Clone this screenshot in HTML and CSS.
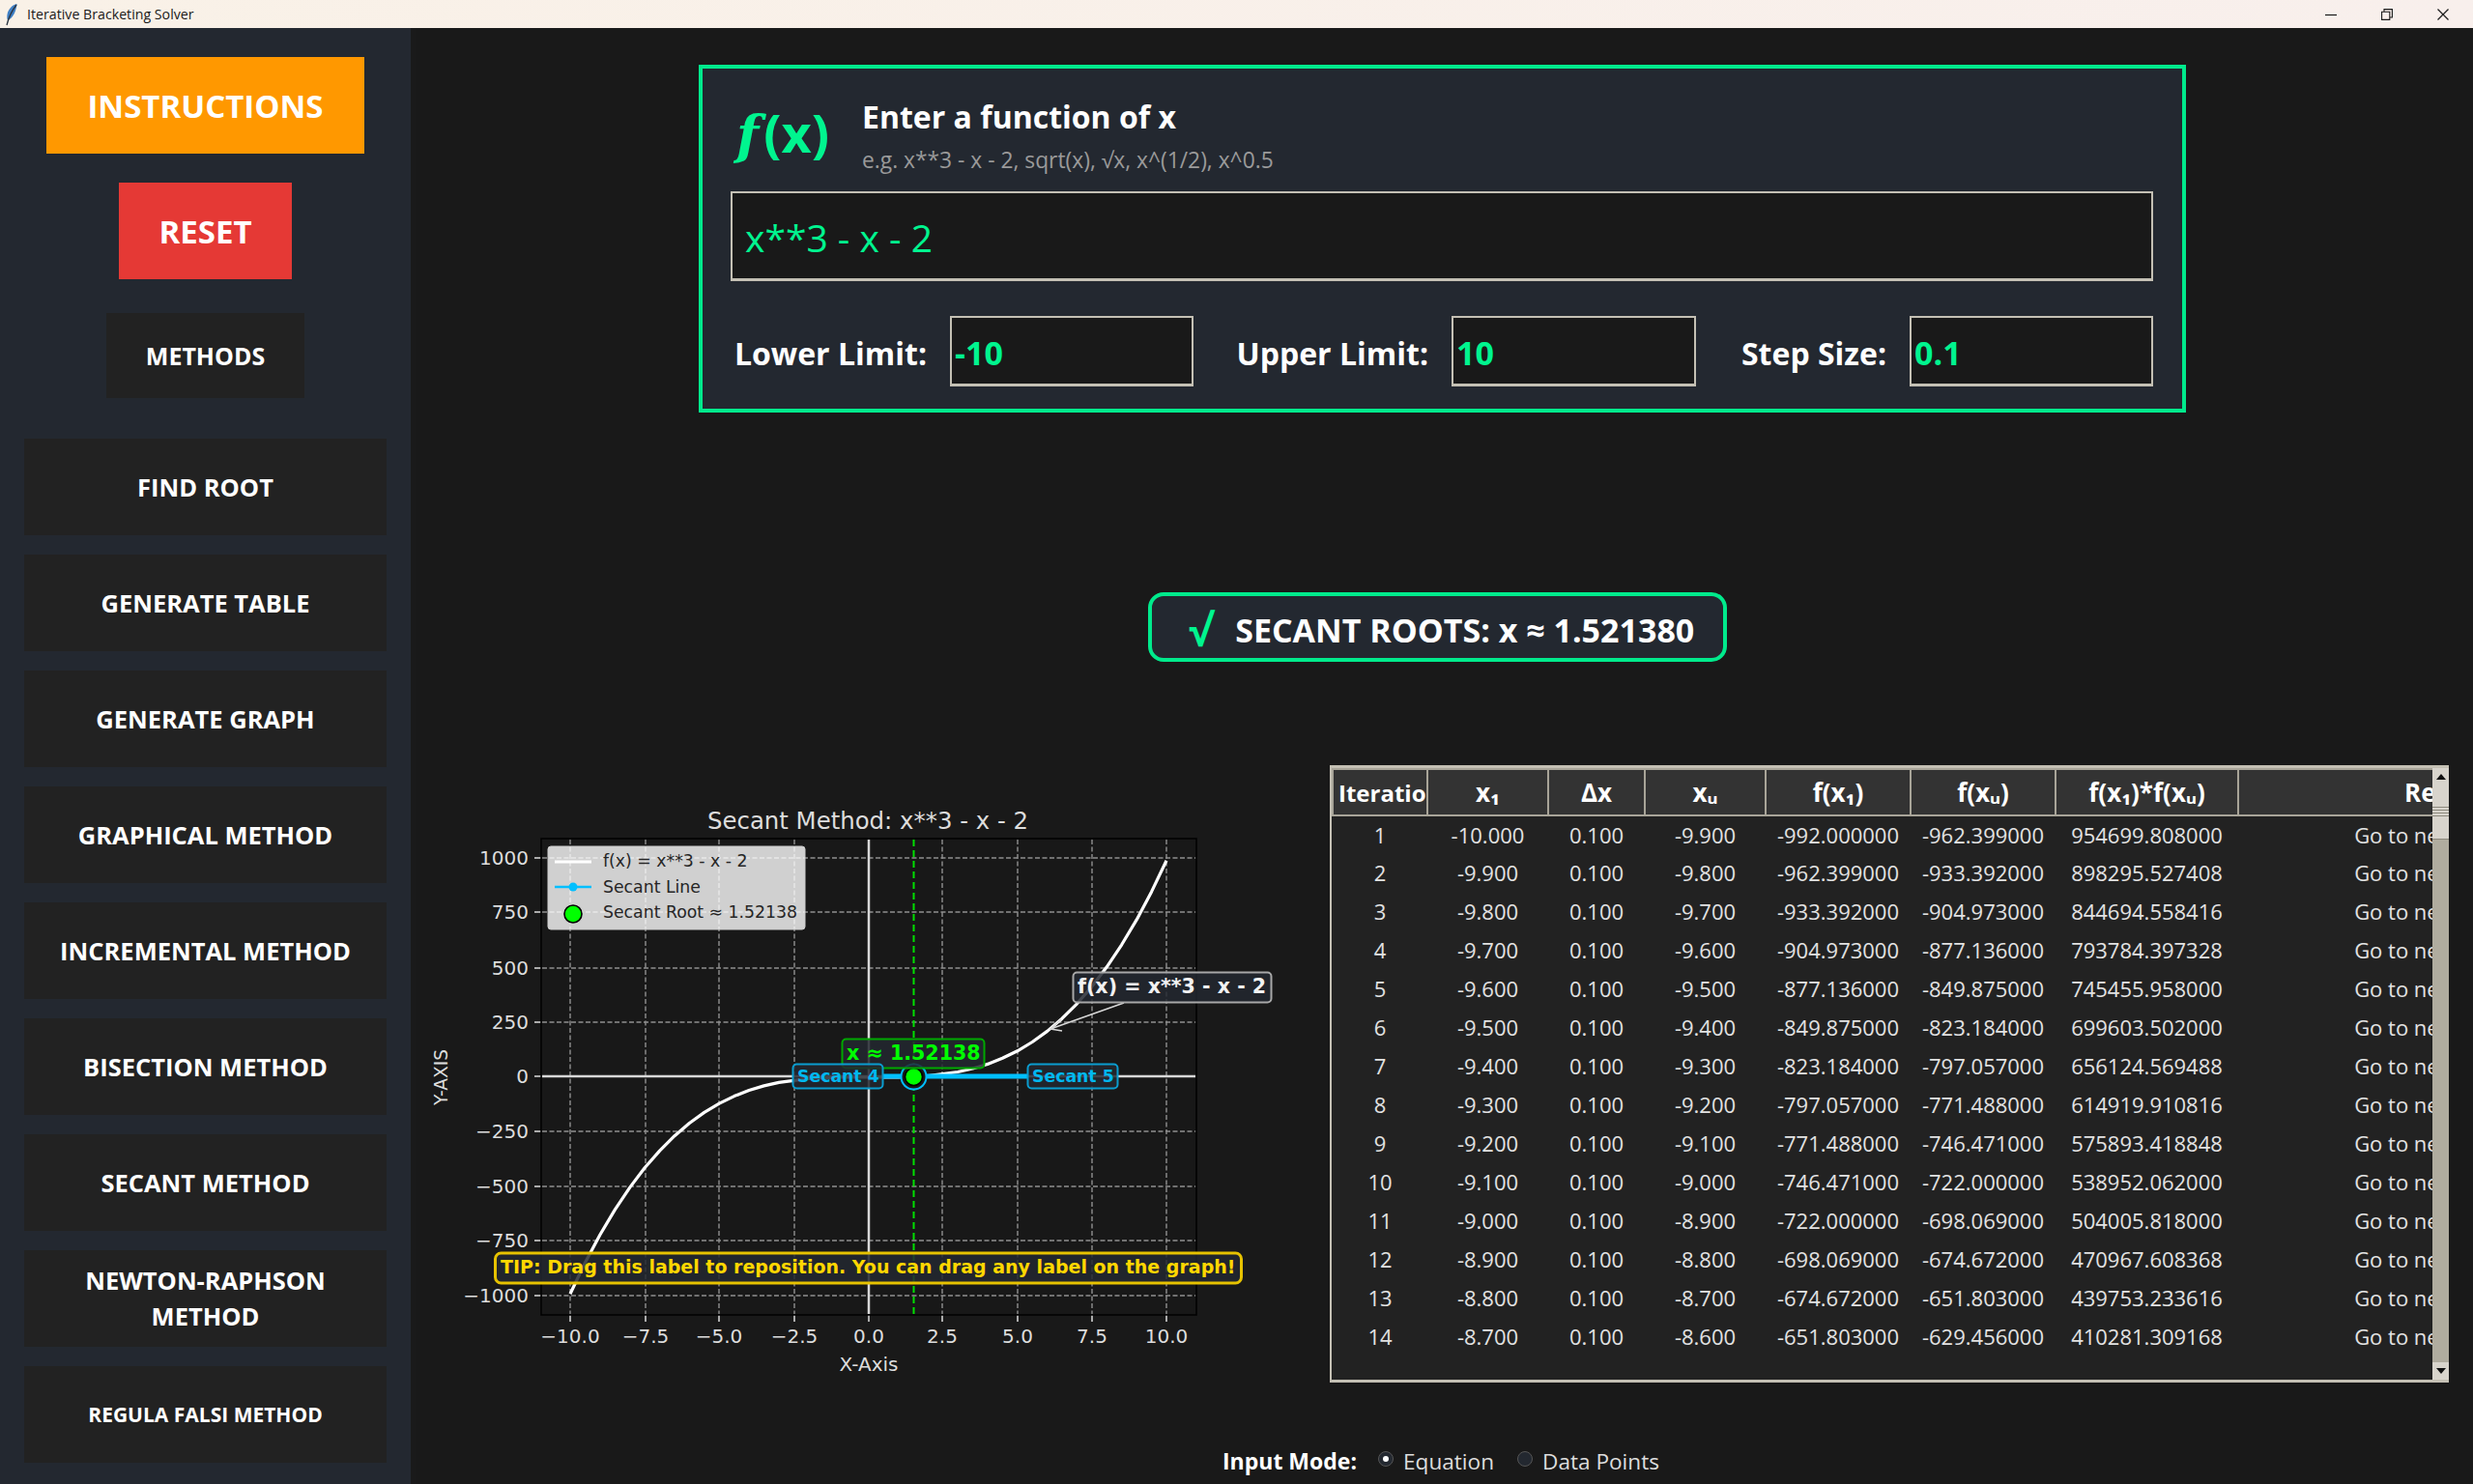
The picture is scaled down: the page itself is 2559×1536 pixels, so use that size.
FILE: index.html
```html
<!DOCTYPE html>
<html lang="en">
<head>
  <meta charset="UTF-8">
  <title>Iterative Bracketing Solver</title>
  <link rel="stylesheet" href="styles.css">
</head>
<body>
  <header class="titlebar">
    <svg class="app-icon" width="14" height="24" viewBox="0 0 14 24">
      <path d="M12.5 1C8 2 3.5 6 2.5 12c-.4 2.6-.2 4.500.5 6 3-1 6.500-5 8-10 .7-2.500 1.500-5 1.500-7z" fill="#3f7fc4"/>
      <path d="M12 2C8 7 4.500 13 2 23" fill="none" stroke="#2b3440" stroke-width="1.300"/>
    </svg>
    <span class="app-title">Iterative Bracketing Solver</span>
    <div class="window-controls">
      <svg width="12" height="12" viewBox="0 0 12 12"><path d="M0 6.500h12" stroke="#1a1a1a" stroke-width="1.200"/></svg>
      <svg width="12" height="12" viewBox="0 0 12 12"><path d="M.6 3.200h8.200v8.200H.6zM3 3V.6h8.400V9H9" fill="none" stroke="#1a1a1a" stroke-width="1.100"/></svg>
      <svg width="12" height="12" viewBox="0 0 12 12"><path d="M.5.500l11 11M11.500.500l-11 11" stroke="#1a1a1a" stroke-width="1.200"/></svg>
    </div>
  </header>

  <div class="app">
    <aside class="sidebar">
      <button class="btn btn-instructions">INSTRUCTIONS</button>
      <button class="btn btn-reset">RESET</button>
      <div class="methods-title">METHODS</div>
      <div class="method-list">
        <button class="btn-method">FIND ROOT</button>
        <button class="btn-method">GENERATE TABLE</button>
        <button class="btn-method">GENERATE GRAPH</button>
        <button class="btn-method">GRAPHICAL METHOD</button>
        <button class="btn-method">INCREMENTAL METHOD</button>
        <button class="btn-method">BISECTION METHOD</button>
        <button class="btn-method">SECANT METHOD</button>
        <button class="btn-method">NEWTON-RAPHSON<br>METHOD</button>
        <button class="btn-method btn-small">REGULA FALSI METHOD</button>
      </div>
    </aside>

    <main class="content">
      <section class="func-card">
        <div class="func-head">
          <div class="fx-logo"><i>f</i>(x)</div>
          <div>
            <div class="func-title">Enter a function of x</div>
            <div class="func-hint">e.g. x**3 - x - 2, sqrt(x), √x, x^(1/2), x^0.5</div>
          </div>
        </div>
        <input class="func-input" type="text" value="x**3 - x - 2">
        <div class="limits">
          <label class="limit-label">Lower Limit:</label>
          <input class="limit-input" type="text" value="-10">
          <label class="limit-label">Upper Limit:</label>
          <input class="limit-input" type="text" value="10">
          <label class="limit-label">Step Size:</label>
          <input class="limit-input" type="text" value="0.1">
        </div>
      </section>

      <div class="root-badge"><span class="root-check">√</span><span>SECANT ROOTS: x ≈ 1.521380</span></div>

      <div class="results">
        <svg class="chart" width="930" height="610" viewBox="430 830 930 610">
          <rect x="560" y="868" width="678" height="493" class="plot-bg"/>
          <path class="grid" d="M590 869V1360M668 869V1360M744 869V1360M822 869V1360M975 869V1360M1053 869V1360M1130 869V1360M1207 869V1360M561 888H1237M561 944H1237M561 1002H1237M561 1058H1237M561 1171H1237M561 1228H1237M561 1284H1237M561 1341H1237"/>
          <path class="ticks" d="M590 1361v7M668 1361v7M744 1361v7M822 1361v7M899 1361v7M975 1361v7M1053 1361v7M1130 1361v7M1207 1361v7M553 888h7M553 944h7M553 1002h7M553 1058h7M553 1114h7M553 1171h7M553 1228h7M553 1284h7M553 1341h7"/>
          <path class="axis-line" d="M561 1114H1237M899 869V1360"/>
          <path class="root-line" d="M945.500 869V1360"/>
          <polyline class="curve" points="590,1339.200 605.400,1307 620.900,1278 636.300,1252.100 651.700,1229.100 667.100,1208.800 682.600,1191.100 698,1175.700 713.400,1162.500 728.800,1151.400 744.300,1142.100 759.700,1134.600 775.100,1128.500 790.500,1123.900 806,1120.400 836.800,1116.300 867.700,1115 898.500,1115 929.400,1115 960.200,1113.600 991.100,1109.500 1006.500,1106 1021.900,1101.400 1037.300,1095.300 1052.800,1087.800 1068.200,1078.500 1083.600,1067.400 1099,1054.200 1114.500,1038.800 1129.900,1021.100 1145.300,1000.800 1160.700,977.800 1176.200,951.900 1191.600,922.900 1207,890.700"/>
          <rect class="plot-frame" x="560" y="868" width="678" height="493"/>
          <path class="secant-line" d="M914 1114H1063"/>
          <circle cx="945.500" cy="1114.500" r="14" class="secant-dot"/>
          <circle cx="945.500" cy="1114.500" r="12" class="dot-gap"/>
          <circle cx="945.500" cy="1114.500" r="9" class="root-dot"/>

          <path class="arrow" d="M1163 1038L1087 1065M1098 1055L1087 1065L1099 1067"/>
          <rect class="tag tag-white" x="1110.500" y="1006.500" width="205" height="31" rx="4"/>
          <text class="tag-text fill-white" x="1115" y="1028">f(x) = x**3 - x - 2</text>
          <rect class="tag tag-green" x="871.500" y="1075.500" width="147" height="30" rx="4"/>
          <text class="tag-text fill-green" x="876" y="1097">x ≈ 1.52138</text>
          <rect class="tag tag-blue" x="820.500" y="1101.500" width="93" height="25" rx="4"/>
          <text class="tag-small" x="825" y="1120">Secant 4</text>
          <rect class="tag tag-blue" x="1063.500" y="1101.500" width="93" height="25" rx="4"/>
          <text class="tag-small" x="1068" y="1120">Secant 5</text>

          <rect class="legend-box" x="567" y="876" width="266" height="86" rx="3"/>
          <path class="legend-curve" d="M574 892H612"/>
          <path class="legend-secant" d="M574 918H612"/>
          <circle cx="593" cy="918" r="4.500" class="legend-dot"/>
          <circle cx="593" cy="946" r="9" class="root-dot"/>
          <text class="legend-text" x="624" y="897">f(x) = x**3 - x - 2</text>
          <text class="legend-text" x="624" y="924">Secant Line</text>
          <text class="legend-text" x="624" y="950">Secant Root ≈ 1.52138</text>

          <rect class="tag tag-tip" x="512.500" y="1297" width="772" height="31" rx="6"/>
          <text class="tip-text" x="518" y="1318">TIP: Drag this label to reposition. You can drag any label on the graph!</text>

          <text class="chart-title" x="898" y="858">Secant Method: x**3 - x - 2</text>
          <g class="y-labels">
            <text x="547" y="895">1000</text>
            <text x="547" y="951">750</text>
            <text x="547" y="1009">500</text>
            <text x="547" y="1065">250</text>
            <text x="547" y="1121">0</text>
            <text x="547" y="1178">−250</text>
            <text x="547" y="1235">−500</text>
            <text x="547" y="1291">−750</text>
            <text x="547" y="1348">−1000</text>
          </g>
          <g class="x-labels">
            <text x="590" y="1390">−10.0</text>
            <text x="668" y="1390">−7.5</text>
            <text x="744" y="1390">−5.0</text>
            <text x="822" y="1390">−2.5</text>
            <text x="899" y="1390">0.0</text>
            <text x="975" y="1390">2.5</text>
            <text x="1053" y="1390">5.0</text>
            <text x="1130" y="1390">7.5</text>
            <text x="1207" y="1390">10.0</text>
          </g>
          <text class="axis-title" x="899" y="1419">X-Axis</text>
          <text class="axis-title axis-title-y" transform="translate(463 1115) rotate(-90)">Y-AXIS</text>
        </svg>

        <div class="table-wrap">
          <div class="table-clip">
            <table class="iter-table">
              <colgroup>
                <col class="c-iter"><col class="c-x"><col class="c-dx"><col class="c-x"><col class="c-f"><col class="c-f"><col class="c-prod"><col class="c-result">
              </colgroup>
              <thead>
                <tr><th class="th-left">Iteration</th><th>x₁</th><th>Δx</th><th>xᵤ</th><th>f(x₁)</th><th>f(xᵤ)</th><th>f(x₁)*f(xᵤ)</th><th class="th-result">Result</th></tr>
              </thead>
              <tbody>
                <tr><td>1</td><td>-10.000</td><td>0.100</td><td>-9.900</td><td>-992.000000</td><td>-962.399000</td><td>954699.808000</td><td>Go to next iteration</td></tr>
                <tr><td>2</td><td>-9.900</td><td>0.100</td><td>-9.800</td><td>-962.399000</td><td>-933.392000</td><td>898295.527408</td><td>Go to next iteration</td></tr>
                <tr><td>3</td><td>-9.800</td><td>0.100</td><td>-9.700</td><td>-933.392000</td><td>-904.973000</td><td>844694.558416</td><td>Go to next iteration</td></tr>
                <tr><td>4</td><td>-9.700</td><td>0.100</td><td>-9.600</td><td>-904.973000</td><td>-877.136000</td><td>793784.397328</td><td>Go to next iteration</td></tr>
                <tr><td>5</td><td>-9.600</td><td>0.100</td><td>-9.500</td><td>-877.136000</td><td>-849.875000</td><td>745455.958000</td><td>Go to next iteration</td></tr>
                <tr><td>6</td><td>-9.500</td><td>0.100</td><td>-9.400</td><td>-849.875000</td><td>-823.184000</td><td>699603.502000</td><td>Go to next iteration</td></tr>
                <tr><td>7</td><td>-9.400</td><td>0.100</td><td>-9.300</td><td>-823.184000</td><td>-797.057000</td><td>656124.569488</td><td>Go to next iteration</td></tr>
                <tr><td>8</td><td>-9.300</td><td>0.100</td><td>-9.200</td><td>-797.057000</td><td>-771.488000</td><td>614919.910816</td><td>Go to next iteration</td></tr>
                <tr><td>9</td><td>-9.200</td><td>0.100</td><td>-9.100</td><td>-771.488000</td><td>-746.471000</td><td>575893.418848</td><td>Go to next iteration</td></tr>
                <tr><td>10</td><td>-9.100</td><td>0.100</td><td>-9.000</td><td>-746.471000</td><td>-722.000000</td><td>538952.062000</td><td>Go to next iteration</td></tr>
                <tr><td>11</td><td>-9.000</td><td>0.100</td><td>-8.900</td><td>-722.000000</td><td>-698.069000</td><td>504005.818000</td><td>Go to next iteration</td></tr>
                <tr><td>12</td><td>-8.900</td><td>0.100</td><td>-8.800</td><td>-698.069000</td><td>-674.672000</td><td>470967.608368</td><td>Go to next iteration</td></tr>
                <tr><td>13</td><td>-8.800</td><td>0.100</td><td>-8.700</td><td>-674.672000</td><td>-651.803000</td><td>439753.233616</td><td>Go to next iteration</td></tr>
                <tr><td>14</td><td>-8.700</td><td>0.100</td><td>-8.600</td><td>-651.803000</td><td>-629.456000</td><td>410281.309168</td><td>Go to next iteration</td></tr>
              </tbody>
            </table>
          </div>
          <div class="scrollbar">
            <div class="scroll-btn"><span class="arrow-up"></span></div>
            <div class="scroll-thumb"><span class="grip"></span></div>
            <div class="scroll-track"></div>
            <div class="scroll-btn"><span class="arrow-down"></span></div>
          </div>
        </div>
      </div>

      <div class="input-mode">
        <span class="mode-label">Input Mode:</span>
        <span class="radio radio-on"></span><span class="mode-option">Equation</span>
        <span class="radio"></span><span class="mode-option">Data Points</span>
      </div>
    </main>
  </div>
</body>
</html>
```

FILE: styles.css
```css
* {
  box-sizing: border-box;
}
html, body {
  margin: 0;
  height: 100%;
  overflow: hidden;
}
body {
  background: #191919;
  color: #fff;
  font-family: "Open Sans", "Noto Sans", sans-serif;
}

/* window title bar */
.titlebar {
  height: 29px;
  display: flex;
  align-items: center;
  background: linear-gradient(90deg, #f9f1e7, #f8efec);
  color: #1a1a1a;
}
.app-icon {
  margin-left: 5px;
}
.app-title {
  margin-left: 9px;
  font-size: 14.200px;
}
.window-controls {
  margin-left: auto;
  display: flex;
  gap: 46px;
  padding-right: 25px;
}

.app {
  display: flex;
  height: 1507px;
}

/* left column */
.sidebar {
  width: 430px;
  flex: none;
  padding-top: 30px;
  background: #232830;
  border-right: 5px solid #1a1a1a;
  display: flex;
  flex-direction: column;
  align-items: center;
}
button {
  font-family: inherit;
  color: #fff;
  border: 0;
  padding: 0;
}
.btn {
  height: 100px;
  font-size: 33px;
  font-weight: 700;
}
.btn-instructions {
  width: 329px;
  background: #ff9800;
  margin-bottom: 30px;
}
.btn-reset {
  width: 179px;
  background: #e53935;
  margin-bottom: 35px;
}
.methods-title {
  width: 205px;
  height: 88px;
  background: #222;
  font-size: 25px;
  font-weight: 700;
  display: flex;
  align-items: center;
  justify-content: center;
  margin-bottom: 42px;
}
.method-list {
  display: flex;
  flex-direction: column;
  gap: 20px;
}
.btn-method {
  width: 375px;
  height: 100px;
  background: #222;
  font-size: 25.500px;
  font-weight: 700;
  line-height: 37px;
}
.btn-small {
  font-size: 21px;
}

/* main column */
.content {
  flex: 1;
  min-width: 0;
}
.func-card {
  width: 1539px;
  height: 360px;
  margin: 38px 0 0 293px;
  padding: 30px 30px 0 29px;
  background: #232830;
  border: 4px solid #00ea8c;
}
.func-head {
  height: 97px;
  display: flex;
}
.fx-logo {
  width: 136px;
  padding-left: 6px;
  color: #00f58f;
  font-size: 54px;
  font-weight: 700;
  line-height: 72px;
}
.fx-logo i {
  font-family: "DejaVu Serif", serif;
  margin-right: 5px;
}
.func-title {
  font-size: 32px;
  font-weight: 700;
  line-height: 40px;
}
.func-hint {
  margin-top: 10px;
  color: #9a9a9a;
  font-size: 22.800px;
  line-height: 30px;
}
input {
  display: block;
  font-family: inherit;
  color: #00f58f;
  background: #191919;
  border: 2px solid #c4c0b4;
  border-bottom-width: 3px;
  outline: 0;
}
.func-input {
  width: 100%;
  height: 93px;
  padding: 3px 0 0 13px;
  font-size: 39px;
}
.limits {
  margin-top: 36px;
  display: grid;
  grid-template-columns: 227px 252px 267px 253px 221px 252px;
  height: 73px;
}
.limit-label {
  align-self: center;
  text-align: right;
  padding: 3px 24px 0 0;
  font-size: 32px;
  font-weight: 700;
}
.limit-input {
  width: 100%;
  height: 73px;
  padding: 3px 0 0 3px;
  font-size: 34px;
  font-weight: 700;
}

.root-badge {
  width: 599px;
  height: 72px;
  margin: 186px 0 0 758px;
  display: flex;
  align-items: center;
  gap: 24px;
  padding: 5px 0 0 38px;
  background: #232830;
  border: 4px solid #00ea8c;
  border-radius: 16px;
  font-size: 34px;
  font-weight: 700;
}
.root-check {
  color: #00f58f;
  font-size: 44px;
}

.results {
  margin-top: 107px;
  display: flex;
  align-items: flex-start;
}
.chart {
  display: block;
  flex: none;
  margin-top: 38px;
}

/* chart parts */
.plot-bg {
  fill: #181818;
}
.plot-frame {
  fill: none;
  stroke: #000;
  stroke-width: 1.5;
}
.grid {
  fill: none;
  stroke: #8f8f8f;
  stroke-width: 1.4;
  stroke-dasharray: 5 2.5;
}
.ticks {
  fill: none;
  stroke: #ddd;
  stroke-width: 1.5;
}
.axis-line {
  fill: none;
  stroke: #d8d8d8;
  stroke-width: 2.5;
}
.root-line {
  fill: none;
  stroke: #00e000;
  stroke-width: 2;
  stroke-dasharray: 7 4;
}
.curve {
  fill: none;
  stroke: #fff;
  stroke-width: 3.2;
  stroke-linejoin: round;
}
.secant-line {
  stroke: #00bfff;
  stroke-width: 5;
}
.secant-dot {
  fill: #00bfff;
}
.dot-gap {
  fill: #181818;
}
.root-dot {
  fill: #00ff00;
  stroke: #000;
  stroke-width: 1.6;
}
.arrow {
  fill: none;
  stroke: #d8d8d8;
  stroke-width: 1.5;
}
.tag {
  fill: #232830;
  fill-opacity: .85;
  stroke-width: 2;
}
.tag-white {
  stroke: #a8a8a8;
}
.tag-green {
  stroke: #00a800;
}
.tag-blue {
  stroke: #0a9dd0;
}
.tag-tip {
  stroke: #e6c200;
  stroke-width: 3;
}
.tag-text, .tag-small, .tip-text {
  font-family: "DejaVu Sans", sans-serif;
  font-weight: 700;
}
.tag-text {
  font-size: 20.600px;
}
.fill-white {
  fill: #f2f2f2;
}
.fill-green {
  fill: #00ff00;
}
.tag-small {
  font-size: 17.300px;
  fill: #00b8f0;
}
.tip-text {
  font-size: 19px;
  fill: #ffd700;
}
.legend-box {
  fill: #fff;
  fill-opacity: .8;
  stroke: #ccc;
}
.legend-curve {
  stroke: #fff;
  stroke-width: 3.2;
}
.legend-secant {
  stroke: #00bfff;
  stroke-width: 2.5;
}
.legend-dot {
  fill: #00bfff;
}
.legend-text {
  font-family: "DejaVu Sans", sans-serif;
  font-size: 17.300px;
  fill: #262626;
}
.chart-title, .y-labels, .x-labels, .axis-title {
  font-family: "DejaVu Sans", sans-serif;
  fill: #ddd;
}
.chart-title {
  font-size: 24.400px;
  text-anchor: middle;
}
.y-labels, .x-labels {
  font-size: 20px;
}
.y-labels {
  text-anchor: end;
}
.x-labels, .axis-title {
  text-anchor: middle;
}
.axis-title {
  font-size: 20px;
}
.axis-title-y {
  font-size: 18.600px;
}

/* iteration table */
.table-wrap {
  width: 1158px;
  height: 639px;
  margin-left: 16px;
  flex: none;
  display: flex;
  background: #222;
  border-left: 2px solid #c4c0b4;
  border-top: 3px solid #c4c0b4;
  border-bottom: 3px solid #c4c0b4;
}
.table-clip {
  width: 1139px;
  flex: none;
  overflow: hidden;
}
.iter-table {
  width: 1377px;
  table-layout: fixed;
  border-collapse: collapse;
  color: #e2e2e2;
  font-size: 22px;
}
.c-iter { width: 98px; }
.c-x { width: 125px; }
.c-dx { width: 100px; }
.c-f { width: 150px; }
.c-prod { width: 189px; }
.c-result { width: 440px; }
.iter-table th {
  height: 48px;
  padding: 0;
  background: #333;
  border: 2px solid #a8a498;
  color: #fff;
  font-size: 26px;
  font-weight: 700;
  white-space: nowrap;
  overflow: hidden;
}
.iter-table .th-left {
  text-align: left;
  padding-left: 5px;
  font-size: 24px;
}
.iter-table .th-result {
  padding-right: 14px;
}
.iter-table td {
  height: 40px;
  padding: 0 0 2px;
  text-align: center;
  white-space: nowrap;
}

.scrollbar {
  width: 17px;
  flex: none;
  display: flex;
  flex-direction: column;
  background: #b0ac9f;
}
.scroll-btn {
  height: 18px;
  flex: none;
  background: #d8d4cc;
  display: flex;
  align-items: center;
  justify-content: center;
}
.arrow-up, .arrow-down {
  width: 0;
  height: 0;
  border-left: 5px solid transparent;
  border-right: 5px solid transparent;
}
.arrow-up {
  border-bottom: 6px solid #111;
}
.arrow-down {
  border-top: 6px solid #111;
}
.scroll-thumb {
  height: 56px;
  flex: none;
  background: #d8d4cc;
  display: flex;
  align-items: center;
  border-bottom: 1px solid #8d897d;
}
.grip {
  width: 100%;
  height: 11px;
  background: repeating-linear-gradient(#8d897d 0 1px, #d8d4cc 1px 3px);
}
.scroll-track {
  flex: 1;
}

/* bottom radio row */
.input-mode {
  margin-top: 55px;
  height: 34px;
  padding-left: 835px;
  display: flex;
  align-items: center;
  font-size: 23px;
}
.mode-label {
  font-weight: 700;
  margin-right: 22px;
}
.mode-option {
  color: #ddd;
  font-size: 22.600px;
  margin: 0 24px 0 10px;
}
.radio {
  position: relative;
  width: 16px;
  height: 16px;
  border-radius: 50%;
  background: #232830;
  border: 1px solid #555;
  margin-top: -4px;
}
.radio-on::after {
  content: "";
  position: absolute;
  left: 4px;
  top: 4px;
  width: 6px;
  height: 6px;
  border-radius: 50%;
  background: #fff;
}
```
